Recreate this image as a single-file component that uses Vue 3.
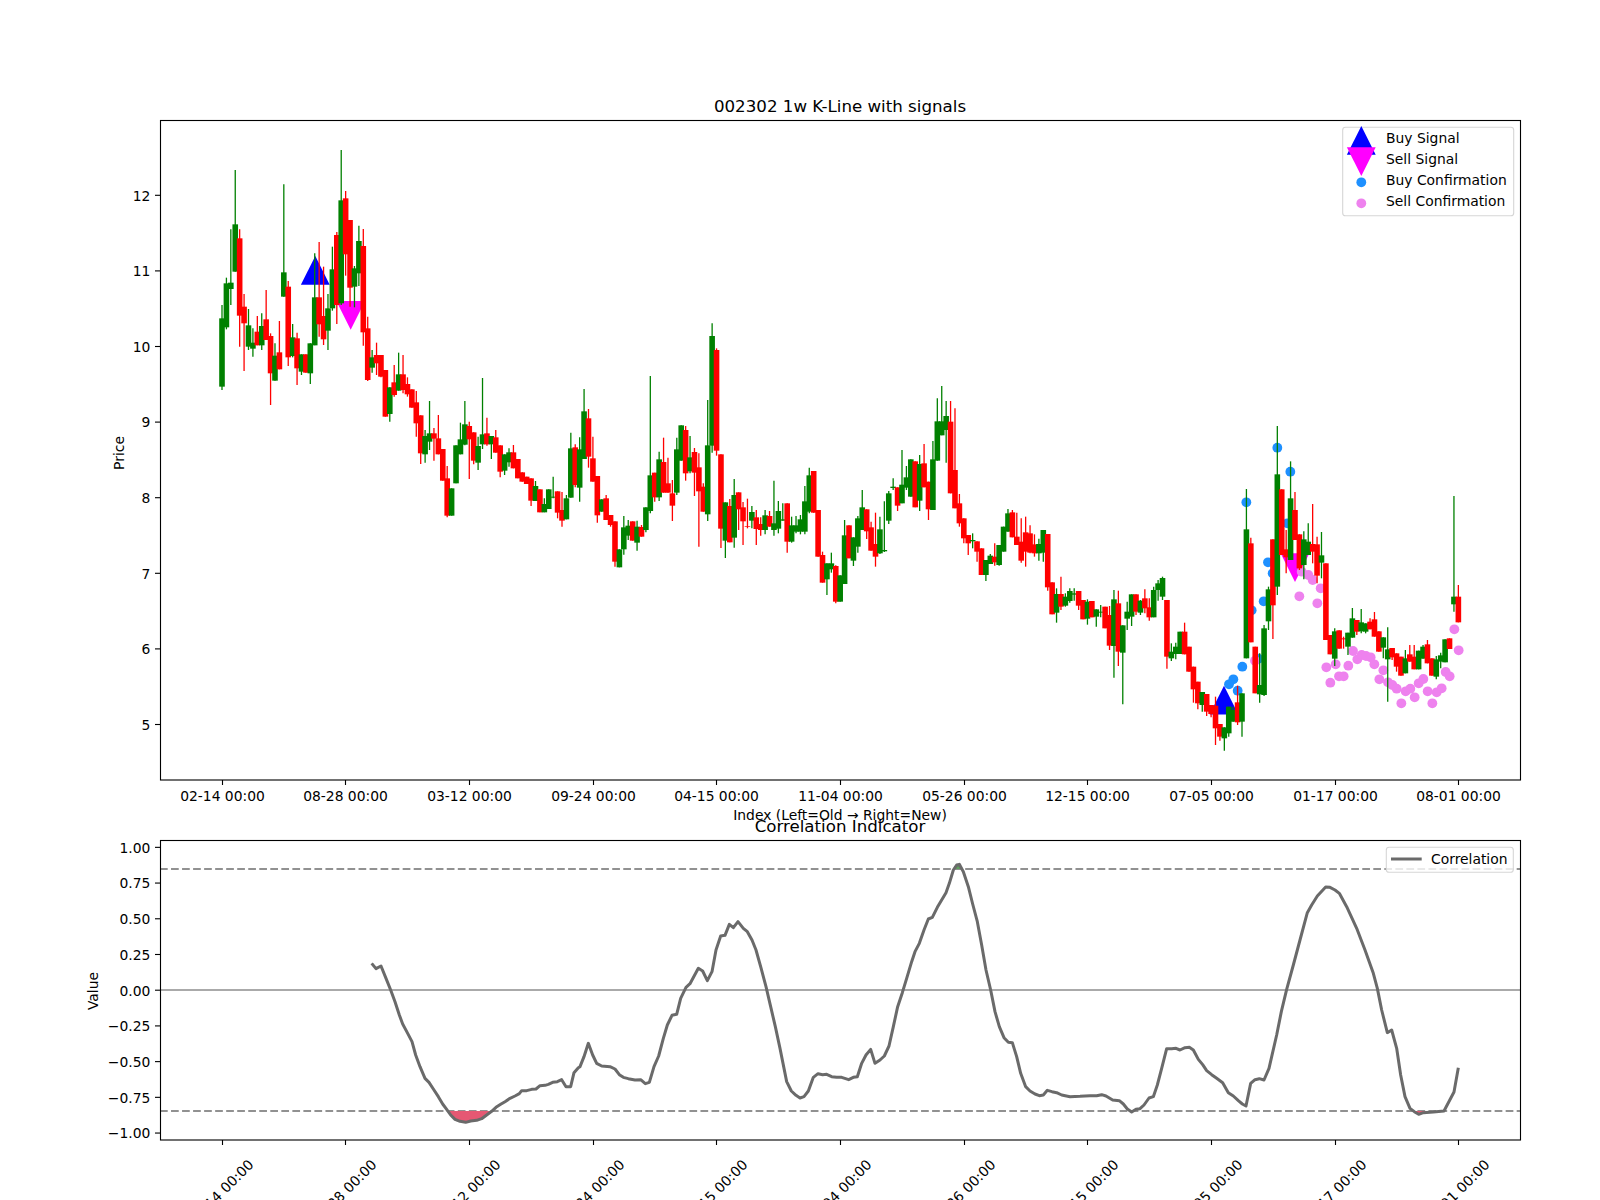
<script setup>
// candle rows read off the chart: colour + bodyTop,bodyBottom,high,low (high/low optional)
// each block keeps its own y origin, values are in 1/3 px from that origin
const blocks = [
  {
    y0: 90,
    rows: `g685,890,645,900 g580,712,563,718 g578,597,418,645 g403,545,240,545 r445,677,418,770 r650,700,612,843
    g706,770,657,780 g758,776,715,800 r725,766,678,766 g708,766,670,780 r688,750,600,750 r738,850,730,945
    g797,872,760,872 r787,838,693,838 g547,620,283,620 r590,802,573,828 g742,798,702,802 r745,835,728,885
    g793,845,793,855 r793,848 g760,850,760,882 g622,766,490,766 r622,703,456,740 r678,748,530,765
    g655,722,612,780 g538,655,470,662 r435,645,426,702 g331,640,180,645 r325,493,303,557 r390,593,390,650
    g535,590,528,652 g453,550,407,588`,
  },
  {
    y0: 300,
    rows: `r-162,97,-213,137 r85,240,50,243 g172,203,150,218 r165,190,128,225 r165,230,165,232 r210,350
    g262,342,262,365 r247,285,195,290 g223,272,158,272 r223,270,165,280 r252,283,232,290 r268,323
    r307,370,273,410 r346,460,346,492 g408,463,390,488 g400,425,303,450 r400,416,384,482 r415,463,345,463
    r447,542 r535,647,498,652 g565,647 g436,550 g418,463,368,463 g373,434,303,436 r378,418,365,537
    r397,482,397,493 g438,488,410,510 g403,433,234,447 r400,433,353,437 g408,433,408,477 r412,458,390,458
    r436,515,436,532 g463,512,463,525 g457,487,445,500 r457,505,435,505 r477,535 r517,545 r530,552
    r535,602,535,618 g558,603,543,603 r568,637 g612,637,595,637`,
  },
  {
    y0: 330,
    rows: `g478,537 g500,503,440,505 r484,548,484,565 r540,572,486,590 g505,568,495,568 g355,503,308,503
    r352,465,343,472 g358,473,322,515 g244,387,177,387 r265,380,237,413 r385,455,320,455 r438,556,438,578
    g508,545 r505,570,495,570 r555,585,555,590 r574,695,574,710 g658,712 g592,658,558,674 g587,617,570,630
    r574,632 g590,638,572,662 r591,620,585,620 g532,600,532,607 g436,543,138,550 r428,502,428,515
    g388,502,365,513 r396,488,323,488 r460,488,383,488 r490,527,450,573 g358,488,323,495 g286,392
    r300,430,288,452 g382,424,318,430 r366,428,354,498 r412,484,370,650 r470,545,460,545 g346,553,210,573
    g18,347,-20,368 r60,362,55,377 r373,596,373,654 g517,632,517,684 r528,637,507,637 g495,623,447,653
    r487,538,487,600 r532,574,516,645 r588,590,506,595 g546,572,528,595 r562,597,540,645 r582,600,562,617
    g556,600,540,613 r558,590,543,590 g580,600,452,617 g543,596,513,610 g568,572,520,572 r520,635,520,668
    g586,635,560,638 g586,605,558,610 g568,605,555,613 g514,605,468,613 g436,545,413,550 r423,548 r540,680
    r675,758,665,758 g700,748,700,795 g700,718,668,728 r708,815,706,820 g736,815 g616,762,570,762 r586,685
    g622,692,622,708 g565,650,558,668 g532,600,480,600 r538,604,538,627 r592,662,575,662 r642,680,548,710
    g598,670,560,672 g660,664,514,666 g490,572,483,582 g470,474,445,480 r472,527,472,543 g464,520,360,520
    g442,473,408,480 g388,500 r394,532 g402,512,375,543 r400,472,342,472 r455,538,455,570 g388,540,333,540
    g274,392,205,392 g274,316,168,316 g258,300,213,398`,
  },
  {
    y0: 380,
    rows: `r125,340,63,340 r270,385,85,385 r370,430,342,440 r415,475,415,490 r465,490,465,525 g480,484,460,505
    r484,515,484,545 r505,585 g540,585,540,603 g527,552,522,552 r530,547,490,557 g495,555,495,557 g440,515
    g400,455,387,455 r397,472,390,472 r470,495,398,495 r485,542,415,548 r457,515,410,560 r460,518,436,520
    r493,520,463,530 g492,520,476,542 g450,518,450,545 r462,622,462,632 r607,703 g642,698,625,728
    r642,680,590,690 g650,677,640,680 g633,663,625,668 g640,644,625,662 r633,677,633,690 r660,718
    g665,716,658,734 r663,712 g688,710,688,740 g695,698,675,712 r680,745 r705,797,678,810 g658,798,630,893
    r670,815,632,858 g736,818,736,973 g695,716,665,750 g643,710,643,738 r643,695,643,705 g662,698,660,705
    r655,685,628,700 r682,712,655,722 g630,712,620,712 g610,630,600,662 g594,650,590,660 r660,830,660,866
    g815,835,790,843 g800,822,788,838 g755,822 r755,823,728,823 r800,875 r860,928,860,968 r905,970,905,988`,
  },
  {
    y0: 420,
    rows: `g816,855,816,875 r822,875,822,888 r855,882,855,892 r857,925,830,975 r912,950,912,962 g922,955,922,992
    g860,940,860,950 g870,905,860,905 r847,907,797,915 g820,905,820,950 g328,715,207,715 r370,667,353,667
    r680,820 g795,823,700,848 g625,825,615,828 g508,604,500,630 r358,556,358,657 g163,500,18,525 r208,405
    r388,412,330,460 g235,420,124,420 r270,360,216,360 r343,445,343,450 g358,435,334,478 g365,405,310,405
    r372,395,252,430 r373,467,350,490 g406,428,336,475 r430,660 r645,703 g634,716,625,738 r631,686
    r655,658,650,686 g638,680,638,705 g595,653,564,653 r600,635,600,645 g607,634,567,640 g610,635,610,640
    r605,628,595,628 r598,650,576,650 r634,695 g652,683,652,715 g688,718,622,845 r684,712,684,720
    r700,740,700,755 r710,767 g715,760,690,760 r703,725,675,725 r710,748,675,748 g692,748 g680,716,675,716
    r673,730,660,730 r715,767 g718,770,708,778 g706,725,698,745 g658,727 r655,687 g530,553,228,575
    r530,607,495,607`,
  },
];

const step = 1360 / 308;
const xAt = (i) => 222 + step * i;

const candles = [];
for (const block of blocks) {
  for (const row of block.rows.trim().split(/\s+/)) {
    const [t, b, h, l] = row.slice(1).split(",").map(Number);
    const x = xAt(candles.length);
    const py = (v) => block.y0 + v / 3;
    candles.push({
      color: row[0] === "g" ? "#008000" : "#ff0000",
      x,
      top: py(t),
      height: (b - t) / 3,
      high: py(h === undefined ? t : h),
      low: py(l === undefined ? b : l),
    });
  }
}

const xLabels = [
  "02-14 00:00", "08-28 00:00", "03-12 00:00", "09-24 00:00", "04-15 00:00", "11-04 00:00",
  "05-26 00:00", "12-15 00:00", "07-05 00:00", "01-17 00:00", "08-01 00:00",
];
const xTicks = xLabels.map((label, n) => ({
  label,
  x: Math.floor(xAt(n * 28) + 0.3) + 0.5,
}));

const priceTicks = [5, 6, 7, 8, 9, 10, 11, 12].map((p) => ({
  label: String(p),
  y: 195.3 + (12 - p) * 75.6,
}));
const valueTicks = [1, 0.75, 0.5, 0.25, 0, -0.25, -0.5, -0.75, -1].map((v) => ({
  label: v.toFixed(2).replace("-", "\u2212"),
  y: 990.2 - v * 142.85,
}));

const tri = (x, top) => `${x},${top} ${x - 14.4},${top + 28.7} ${x + 14.4},${top + 28.7}`;
const triDown = (x, top) => `${x - 14.4},${top} ${x + 14.4},${top} ${x},${top + 28.7}`;
const buySignals = [tri(315.3, 256), tri(1224, 685.7)];
const sellSignals = [triDown(350.7, 301), triDown(1295, 553.3)];

const dot = ([x, y]) => ({ cx: 1200 + x / 3, cy: 420 + y / 3 });
const buyDots = [
  [139, 247], [232, 83], [271, 155], [204, 427], [218, 460], [191, 544], [155, 571], [175, 716],
  [127, 740], [100, 778], [87, 793], [113, 812], [262, 310],
].map(dot);
const sellDots = [
  [165, 722], [298, 529], [352, 550], [362, 505], [338, 480], [325, 465], [305, 455], [459, 693],
  [472, 718], [485, 705], [498, 708], [512, 712], [523, 733], [445, 737], [407, 733], [379, 742],
  [417, 769], [431, 769], [391, 788], [550, 751], [538, 778], [564, 787], [577, 795], [590, 806],
  [617, 814], [631, 806], [604, 850], [644, 832], [656, 790], [670, 777], [683, 814], [697, 850],
  [710, 817], [725, 805], [737, 756], [749, 769], [763, 628], [776, 691],
].map(dot);

// correlation line, traced in three runs
const corrRuns = [
  {
    x0: 80,
    pts: [[875,580],[888,596],[903,588],[918,625],[932,660],[945,695],[958,735],[968,762],[983,790],[996,815],[1007,855],[1020,890],[1035,925],[1047,937],[1060,957],[1075,980],[1088,1002],[1100,1018],[1112,1035],[1125,1048],[1140,1054],[1157,1057],[1172,1053],[1190,1051],[1205,1046],[1220,1035],[1235,1024],[1248,1012],[1262,1003],[1275,995],[1290,985],[1305,978],[1318,971],[1325,962],[1340,962],[1355,958],[1368,957],[1380,947],[1395,946],[1405,943],[1418,937],[1432,935],[1445,929],[1458,950],[1472,950],[1482,908],[1495,893]],
  },
  {
    x0: 580,
    pts: [[0,890],[12,860],[25,820],[38,855],[50,880],[65,888],[90,890],[105,897],[118,914],[130,922],[145,926],[165,930],[182,929],[196,941],[208,937],[222,890],[236,858],[250,805],[262,765],[276,736],[290,733],[302,685],[318,652],[330,641],[355,595],[368,603],[382,632],[396,605],[408,540],[422,498],[435,496],[448,463],[460,473],[474,455],[490,475],[502,485],[516,510],[528,540],[542,590],[558,650],[572,710],[586,770],[600,835],[620,935],[634,963],[648,976],[660,984],[672,980],[685,963],[700,922],[714,911],[728,914],[740,913],[755,920],[770,922],[785,922],[806,929],[820,922],[832,920],[845,880],[858,855],[872,838],[885,880],[900,870],[913,858],[927,828],[940,770],[953,710],[967,668],[980,625],[995,575],[1005,545],[1018,520],[1032,480],[1045,447],[1057,442],[1072,412],[1098,368],[1108,340],[1120,300],[1130,285],[1138,283],[1150,305],[1165,350],[1178,402],[1192,455],[1205,525],[1218,600],[1232,660],[1245,725],[1258,770],[1272,803],[1285,817],[1297,818],[1310,860],[1322,910],[1337,950],[1350,963],[1365,972],[1378,977],[1390,975],[1402,961],[1416,965],[1430,968],[1445,975],[1470,980]],
  },
  {
    x0: 1080,
    pts: [[0,979],[30,977],[50,977],[65,974],[78,978],[98,990],[118,992],[130,1002],[142,1017],[155,1026],[168,1018],[180,1016],[192,1005],[207,984],[220,980],[232,945],[245,895],[260,836],[275,836],[288,835],[300,840],[315,833],[328,832],[340,840],[355,868],[368,884],[380,902],[395,914],[410,925],[428,938],[445,968],[460,978],[475,992],[487,1002],[498,1008],[512,940],[525,929],[538,926],[552,930],[567,895],[590,795],[604,725],[620,658],[640,585],[660,510],[682,428],[695,405],[712,378],[737,351],[750,352],[765,360],[778,370],[800,410],[830,475],[855,540],[880,610],[892,655],[905,720],[922,788],[935,780],[950,835],[962,915],[975,980],[990,1015],[1003,1025],[1016,1033],[1030,1028],[1060,1026],[1092,1023],[1122,966],[1135,893]],
  },
];
const toPts = (x0, pts) => pts.map(([x, y]) => `${x0 + x / 3},${770 + y / 3}`).join(" ");
const corrLine = corrRuns.map((r) => toPts(r.x0, r.pts)).join(" ");

const lowFill = toPts(80, [[1107,1023],[1112,1035],[1125,1048],[1140,1054],[1157,1057],[1172,1053],[1190,1051],[1205,1046],[1220,1035],[1233,1023]]);
const lowFill2 = toPts(1080, [[1003,1023],[1003,1025],[1016,1033],[1030,1028],[1060,1026],[1092,1023]]);
const highFill = toPts(580, [[1120,297],[1130,285],[1138,283],[1145,297]]);

const legendItems = [
  { label: "Buy Signal", y: 143.3 },
  { label: "Sell Signal", y: 164 },
  { label: "Buy Confirmation", y: 185.3 },
  { label: "Sell Confirmation", y: 206 },
];
</script>

<template>
  <div class="page">
    <svg class="chart" width="1600" height="1200" viewBox="0 0 1600 1200">
      <!-- price panel -->
      <text class="title" x="840" y="111.7">002302 1w K-Line with signals</text>

      <polygon v-for="(p, n) in buySignals" :key="'b' + n" :points="p" fill="#0000ff" />
      <polygon v-for="(p, n) in sellSignals" :key="'s' + n" :points="p" fill="#ff00ff" />
      <circle v-for="(d, n) in buyDots" :key="'bd' + n" :cx="d.cx" :cy="d.cy" r="4.9" fill="#1e90ff" />
      <circle v-for="(d, n) in sellDots" :key="'sd' + n" :cx="d.cx" :cy="d.cy" r="4.9" fill="#ee82ee" />

      <g v-for="(c, n) in candles" :key="n">
        <line :x1="c.x" :x2="c.x" :y1="c.high" :y2="c.low" :stroke="c.color" stroke-width="1.3" />
        <rect :x="c.x - 2.8" :y="c.top" width="5.6" :height="c.height" :fill="c.color" />
      </g>

      <rect class="spine" x="160.5" y="120.5" width="1360" height="659.5" />

      <g v-for="t in xTicks" :key="t.label">
        <line class="tick" :x1="t.x" :x2="t.x" y1="780" y2="785" />
        <text class="label mid" :x="t.x" y="801">{{ t.label }}</text>
      </g>
      <g v-for="t in priceTicks" :key="t.label">
        <line class="tick" x1="155" x2="160" :y1="t.y" :y2="t.y" />
        <text class="label end" x="150.3" :y="t.y + 5.3">{{ t.label }}</text>
      </g>
      <text class="label mid" transform="translate(124 453) rotate(-90)">Price</text>
      <text class="label mid" x="840" y="820">Index (Left=Old → Right=New)</text>

      <rect class="legend-box" x="1342.7" y="127.3" width="171" height="88.4" rx="2.8" />
      <polygon :points="tri(1361.3, 126)" fill="#0000ff" />
      <polygon :points="triDown(1361.3, 147.3)" fill="#ff00ff" />
      <circle cx="1361.3" cy="182.3" r="4.9" fill="#1e90ff" />
      <circle cx="1361.3" cy="203.3" r="4.9" fill="#ee82ee" />
      <text v-for="l in legendItems" :key="l.label" class="label" x="1386" :y="l.y">{{ l.label }}</text>

      <!-- correlation panel -->
      <text class="title" x="840" y="832">Correlation Indicator</text>

      <line class="zero" x1="160" x2="1520" y1="990" y2="990" />
      <line class="dash" x1="160" x2="1520" y1="869" y2="869" />
      <line class="dash" x1="160" x2="1520" y1="1111" y2="1111" />
      <polygon :points="lowFill" fill="#e55873" />
      <polygon :points="lowFill2" fill="#e55873" />
      <polygon :points="highFill" fill="#5f9f5f" />
      <polyline class="corr" :points="corrLine" />

      <rect class="spine" x="160.5" y="840.5" width="1360" height="299.5" />

      <g v-for="t in xTicks" :key="'r' + t.label">
        <line class="tick" :x1="t.x" :x2="t.x" y1="1140" y2="1145" />
        <text class="label mid" :x="t.x - 1.5" y="1197" :transform="`rotate(-45 ${t.x - 1.5} 1192)`">{{ t.label }}</text>
      </g>
      <g v-for="t in valueTicks" :key="t.label">
        <line class="tick" x1="155" x2="160" :y1="t.y" :y2="t.y" />
        <text class="label end" x="150.3" :y="t.y + 5.3">{{ t.label }}</text>
      </g>
      <text class="label mid" transform="translate(98.3 991) rotate(-90)">Value</text>

      <rect class="legend-box" x="1386.3" y="847.3" width="127" height="25" rx="2.8" />
      <line class="corr" x1="1391" x2="1421.7" y1="859" y2="859" />
      <text class="label" x="1431" y="864.3">Correlation</text>
    </svg>
  </div>
</template>

<style scoped>
.page {
  width: 1600px;
  height: 1200px;
  background: #fff;
  overflow: hidden;
}
.chart {
  display: block;
  font-family: "DejaVu Sans", sans-serif;
}
.title {
  font-size: 16.67px;
  text-anchor: middle;
  fill: #000;
}
.label {
  font-size: 13.89px;
  fill: #000;
}
.mid {
  text-anchor: middle;
}
.end {
  text-anchor: end;
}
.spine {
  fill: none;
  stroke: #000;
  stroke-width: 1.11;
}
.tick {
  stroke: #000;
  stroke-width: 1.11;
}
.legend-box {
  fill: rgba(255, 255, 255, 0.8);
  stroke: #d6d6d6;
  stroke-width: 1.11;
}
.zero {
  stroke: #aaaaaa;
  stroke-width: 2.2;
}
.dash {
  stroke: #919191;
  stroke-width: 2.2;
  stroke-dasharray: 7.7 3.33;
}
.corr {
  fill: none;
  stroke: #6a6a6a;
  stroke-width: 3;
  stroke-linejoin: round;
}
</style>
